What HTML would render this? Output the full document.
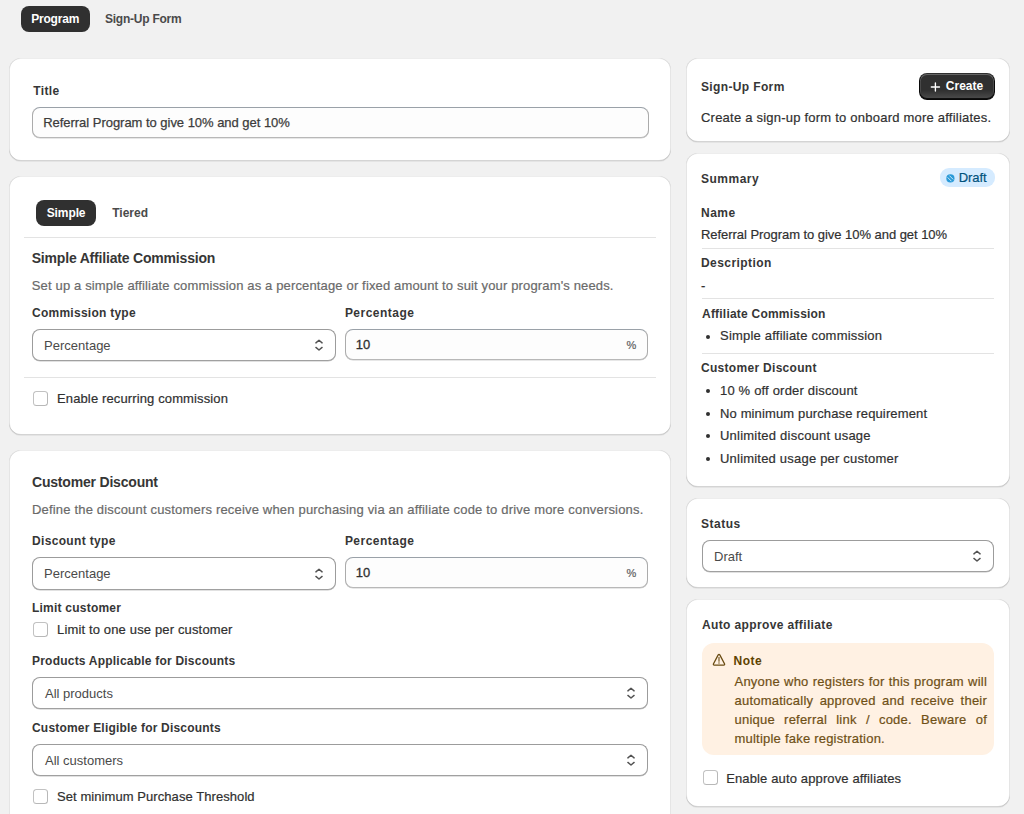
<!DOCTYPE html>
<html><head><meta charset="utf-8"><title>Program</title>
<style>
html,body{margin:0;padding:0;}
body{width:1024px;height:814px;overflow:hidden;background:#f1f1f1;position:relative;font-family:"Liberation Sans", sans-serif;}
.t{position:absolute;white-space:nowrap;line-height:20px;}
.card{position:absolute;background:#fff;border-radius:12px;box-shadow:inset 1px 0 0 0 rgba(0,0,0,.1),inset -1px 0 0 0 rgba(0,0,0,.1),inset 0 -1px 0 0 rgba(0,0,0,.17),inset 0 1px 0 0 rgba(0,0,0,.07),0 1px 0 0 rgba(0,0,0,.05);}
.pill{position:absolute;background:#303030;border-radius:8px;}
.inp{position:absolute;box-sizing:border-box;background:#fdfdfd;border:1px solid #ababab;border-top-color:#9aa1a8;border-bottom-color:#b8b8b8;border-radius:8px;box-shadow:0 0.6px 0 0 #cfcfcf;}
.sel{position:absolute;box-sizing:border-box;background:#fff;border:1px solid #9c9c9c;border-bottom-color:#a0a0a0;border-radius:8px;box-shadow:0 0.6px 0 0 #c4c4c4;}
.cb{position:absolute;box-sizing:border-box;background:#fff;border:1px solid #c2c2c2;border-right-color:#b8b8b8;border-bottom-color:#b8b8b8;border-radius:3.5px;}
.btn{position:absolute;border-radius:8px;background:linear-gradient(180deg,rgba(48,48,48,0) 63.53%,rgba(255,255,255,.15) 100%),#303030;box-shadow:inset 0 -1px 0 1px rgba(0,0,0,.8),inset 0 0 0 1px #303030,inset 0 .5px 0 1.5px rgba(255,255,255,.25);}
</style></head><body>
<div class="pill" style="left:21px;top:6px;width:69px;height:26px;"></div>
<div class="t" style="left:31.20px;top:9px;font-size:12px;font-weight:700;color:#ffffff;letter-spacing:-0.200px;">Program</div>
<div class="t" style="left:104.90px;top:9px;font-size:12px;font-weight:700;color:#4a4a4a;letter-spacing:-0.227px;">Sign-Up Form</div>
<div class="card" style="left:9px;top:58px;width:662px;height:103px;"></div>
<div class="t" style="left:33.20px;top:81px;font-size:12px;font-weight:700;color:#363636;letter-spacing:0.375px;">Title</div>
<div class="inp" style="left:32px;top:107px;width:617px;height:31px;"></div>
<div class="t" style="left:43.20px;top:113px;font-size:13px;font-weight:400;color:#3c3c3c;letter-spacing:-0.031px;-webkit-text-stroke:0.25px #3c3c3c;">Referral Program to give 10% and get 10%</div>
<div class="card" style="left:9px;top:176px;width:662px;height:259px;"></div>
<div class="pill" style="left:36px;top:200px;width:60px;height:26px;"></div>
<div class="t" style="left:46.70px;top:203px;font-size:12px;font-weight:700;color:#ffffff;letter-spacing:-0.100px;">Simple</div>
<div class="t" style="left:112.20px;top:203px;font-size:12px;font-weight:700;color:#4a4a4a;letter-spacing:0.020px;">Tiered</div>
<div style="position:absolute;left:24px;top:237px;width:632px;height:1px;background:#e3e3e3"></div>
<div class="t" style="left:31.70px;top:248px;font-size:14px;font-weight:700;color:#363636;letter-spacing:-0.185px;">Simple Affiliate Commission</div>
<div class="t" style="left:31.80px;top:276px;font-size:13px;font-weight:400;color:#6a6a6a;letter-spacing:0.148px;-webkit-text-stroke:0.2px #6a6a6a;">Set up a simple affiliate commission as a percentage or fixed amount to suit your program's needs.</div>
<div class="t" style="left:32.00px;top:303px;font-size:12px;font-weight:700;color:#363636;letter-spacing:0.257px;">Commission type</div>
<div class="t" style="left:344.90px;top:303px;font-size:12px;font-weight:700;color:#363636;letter-spacing:0.478px;">Percentage</div>
<div class="sel" style="left:32px;top:329px;width:304px;height:32px;"></div>
<div style="position:absolute;left:314px;top:338.0px;width:10px;height:14px"><svg width="10" height="14" viewBox="0 0 10 14" style="position:absolute;left:0;top:0"><path d="M1.9 4.9 L5 2.25 L8.1 4.9 M1.9 9.4 L5 12.05 L8.1 9.4" fill="none" stroke="#525252" stroke-width="1.4" stroke-linecap="round" stroke-linejoin="round"/></svg></div>
<div class="t" style="left:44.10px;top:336px;font-size:13px;font-weight:400;color:#4a4a4a;letter-spacing:0.000px;">Percentage</div>
<div class="inp" style="left:345px;top:329px;width:303px;height:31px;"></div>
<div class="t" style="left:355.80px;top:335px;font-size:13px;font-weight:400;color:#303030;letter-spacing:0.000px;-webkit-text-stroke:0.3px #303030;">10</div>
<div class="t" style="left:626.50px;top:335px;font-size:11px;font-weight:400;color:#616161;letter-spacing:0.000px;-webkit-text-stroke:0.2px #616161;">%</div>
<div style="position:absolute;left:24px;top:377px;width:632px;height:1px;background:#e3e3e3"></div>
<div class="cb" style="left:33px;top:391px;width:15px;height:15px;"></div>
<div class="t" style="left:57.00px;top:389px;font-size:13px;font-weight:400;color:#303030;letter-spacing:0.127px;-webkit-text-stroke:0.2px #303030;">Enable recurring commission</div>
<div class="card" style="left:9px;top:450px;width:662px;height:390px;"></div>
<div class="t" style="left:32.00px;top:472px;font-size:14px;font-weight:700;color:#363636;letter-spacing:-0.194px;">Customer Discount</div>
<div class="t" style="left:32.00px;top:500px;font-size:13px;font-weight:400;color:#6a6a6a;letter-spacing:0.181px;-webkit-text-stroke:0.2px #6a6a6a;">Define the discount customers receive when purchasing via an affiliate code to drive more conversions.</div>
<div class="t" style="left:32.00px;top:531px;font-size:12px;font-weight:700;color:#363636;letter-spacing:0.333px;">Discount type</div>
<div class="t" style="left:344.90px;top:531px;font-size:12px;font-weight:700;color:#363636;letter-spacing:0.478px;">Percentage</div>
<div class="sel" style="left:32px;top:557px;width:304px;height:33px;"></div>
<div style="position:absolute;left:314px;top:566.5px;width:10px;height:14px"><svg width="10" height="14" viewBox="0 0 10 14" style="position:absolute;left:0;top:0"><path d="M1.9 4.9 L5 2.25 L8.1 4.9 M1.9 9.4 L5 12.05 L8.1 9.4" fill="none" stroke="#525252" stroke-width="1.4" stroke-linecap="round" stroke-linejoin="round"/></svg></div>
<div class="t" style="left:44.10px;top:564px;font-size:13px;font-weight:400;color:#4a4a4a;letter-spacing:0.000px;">Percentage</div>
<div class="inp" style="left:345px;top:557px;width:303px;height:31px;"></div>
<div class="t" style="left:355.80px;top:563px;font-size:13px;font-weight:400;color:#303030;letter-spacing:0.000px;-webkit-text-stroke:0.3px #303030;">10</div>
<div class="t" style="left:626.50px;top:563px;font-size:11px;font-weight:400;color:#616161;letter-spacing:0.000px;-webkit-text-stroke:0.2px #616161;">%</div>
<div class="t" style="left:32.00px;top:598px;font-size:12px;font-weight:700;color:#363636;letter-spacing:0.223px;">Limit customer</div>
<div class="cb" style="left:33px;top:622px;width:15px;height:15px;"></div>
<div class="t" style="left:57.00px;top:620px;font-size:13px;font-weight:400;color:#303030;letter-spacing:0.150px;-webkit-text-stroke:0.2px #303030;">Limit to one use per customer</div>
<div class="t" style="left:32.00px;top:651px;font-size:12px;font-weight:700;color:#363636;letter-spacing:0.216px;">Products Applicable for Discounts</div>
<div class="sel" style="left:32px;top:677px;width:616px;height:32px;"></div>
<div style="position:absolute;left:626px;top:686.0px;width:10px;height:14px"><svg width="10" height="14" viewBox="0 0 10 14" style="position:absolute;left:0;top:0"><path d="M1.9 4.9 L5 2.25 L8.1 4.9 M1.9 9.4 L5 12.05 L8.1 9.4" fill="none" stroke="#525252" stroke-width="1.4" stroke-linecap="round" stroke-linejoin="round"/></svg></div>
<div class="t" style="left:45.00px;top:684px;font-size:13px;font-weight:400;color:#4a4a4a;letter-spacing:0.000px;">All products</div>
<div class="t" style="left:32.00px;top:718px;font-size:12px;font-weight:700;color:#363636;letter-spacing:0.200px;">Customer Eligible for Discounts</div>
<div class="sel" style="left:32px;top:744px;width:616px;height:32px;"></div>
<div style="position:absolute;left:626px;top:753.0px;width:10px;height:14px"><svg width="10" height="14" viewBox="0 0 10 14" style="position:absolute;left:0;top:0"><path d="M1.9 4.9 L5 2.25 L8.1 4.9 M1.9 9.4 L5 12.05 L8.1 9.4" fill="none" stroke="#525252" stroke-width="1.4" stroke-linecap="round" stroke-linejoin="round"/></svg></div>
<div class="t" style="left:45.00px;top:751px;font-size:13px;font-weight:400;color:#4a4a4a;letter-spacing:0.000px;">All customers</div>
<div class="cb" style="left:33px;top:789px;width:15px;height:15px;"></div>
<div class="t" style="left:57.00px;top:787px;font-size:13px;font-weight:400;color:#303030;letter-spacing:0.069px;-webkit-text-stroke:0.2px #303030;">Set minimum Purchase Threshold</div>
<div class="card" style="left:686px;top:58px;width:324px;height:84px;"></div>
<div class="t" style="left:701.00px;top:77px;font-size:12px;font-weight:700;color:#363636;letter-spacing:0.364px;">Sign-Up Form</div>
<div class="btn" style="left:919px;top:73px;width:76px;height:27px;"></div>
<svg style="position:absolute;left:929.5px;top:81.5px" width="11" height="10" viewBox="0 0 11 10"><path d="M5.4 0.9 V9.1 M1.3 5 H9.5" stroke="#fff" stroke-width="1.35" stroke-linecap="round"/></svg>
<div class="t" style="left:945.80px;top:76px;font-size:12px;font-weight:700;color:#ffffff;letter-spacing:0.020px;">Create</div>
<div class="t" style="left:701.00px;top:108px;font-size:13px;font-weight:400;color:#303030;letter-spacing:0.223px;-webkit-text-stroke:0.2px #303030;">Create a sign-up form to onboard more affiliates.</div>
<div class="card" style="left:686px;top:153px;width:324px;height:334px;"></div>
<div class="t" style="left:701.00px;top:169px;font-size:12px;font-weight:700;color:#363636;letter-spacing:0.500px;">Summary</div>
<div style="position:absolute;left:940px;top:168.3px;width:54.5px;height:18.6px;border-radius:9px;background:#d5ebff"></div>
<svg style="position:absolute;left:945.5px;top:173.5px" width="9" height="9" viewBox="0 0 9 9"><circle cx="4.4" cy="4.4" r="4.1" fill="#2a9ad8"/><path d="M1.6 3.4 L5.4 7.2 M3.4 1.6 L7.2 5.4" stroke="#ffffff" stroke-opacity="0.85" stroke-width="0.9"/></svg>
<div class="t" style="left:958.70px;top:168px;font-size:13px;font-weight:400;color:#00527c;letter-spacing:-0.075px;-webkit-text-stroke:0.2px #00527c;">Draft</div>
<div class="t" style="left:701.00px;top:203px;font-size:12px;font-weight:700;color:#363636;letter-spacing:0.500px;">Name</div>
<div class="t" style="left:701.00px;top:225px;font-size:13px;font-weight:400;color:#303030;letter-spacing:-0.046px;-webkit-text-stroke:0.2px #303030;">Referral Program to give 10% and get 10%</div>
<div style="position:absolute;left:702px;top:248px;width:292px;height:1px;background:#e3e3e3"></div>
<div class="t" style="left:701.00px;top:253px;font-size:12px;font-weight:700;color:#363636;letter-spacing:0.430px;">Description</div>
<div class="t" style="left:701.00px;top:276px;font-size:13px;font-weight:400;color:#303030;letter-spacing:0.000px;-webkit-text-stroke:0.2px #303030;">-</div>
<div style="position:absolute;left:702px;top:298px;width:292px;height:1px;background:#e3e3e3"></div>
<div class="t" style="left:702.00px;top:304px;font-size:12px;font-weight:700;color:#363636;letter-spacing:0.216px;">Affiliate Commission</div>
<div style="position:absolute;left:706.3px;top:334.7px;width:4px;height:4px;border-radius:2px;background:#303030"></div>
<div class="t" style="left:720.00px;top:326px;font-size:13px;font-weight:400;color:#303030;letter-spacing:0.208px;-webkit-text-stroke:0.2px #303030;">Simple affiliate commission</div>
<div style="position:absolute;left:702px;top:353px;width:292px;height:1px;background:#e3e3e3"></div>
<div class="t" style="left:701.00px;top:358px;font-size:12px;font-weight:700;color:#363636;letter-spacing:0.300px;">Customer Discount</div>
<div style="position:absolute;left:706.3px;top:388.9px;width:4px;height:4px;border-radius:2px;background:#303030"></div>
<div class="t" style="left:720.00px;top:381px;font-size:13px;font-weight:400;color:#303030;letter-spacing:0.182px;-webkit-text-stroke:0.2px #303030;">10 % off order discount</div>
<div style="position:absolute;left:706.3px;top:411.7px;width:4px;height:4px;border-radius:2px;background:#303030"></div>
<div class="t" style="left:720.00px;top:404px;font-size:13px;font-weight:400;color:#303030;letter-spacing:0.133px;-webkit-text-stroke:0.2px #303030;">No minimum purchase requirement</div>
<div style="position:absolute;left:706.3px;top:434.4px;width:4px;height:4px;border-radius:2px;background:#303030"></div>
<div class="t" style="left:720.00px;top:426px;font-size:13px;font-weight:400;color:#303030;letter-spacing:0.230px;-webkit-text-stroke:0.2px #303030;">Unlimited discount usage</div>
<div style="position:absolute;left:706.3px;top:457.09999999999997px;width:4px;height:4px;border-radius:2px;background:#303030"></div>
<div class="t" style="left:720.00px;top:449px;font-size:13px;font-weight:400;color:#303030;letter-spacing:0.207px;-webkit-text-stroke:0.2px #303030;">Unlimited usage per customer</div>
<div class="card" style="left:686px;top:498px;width:324px;height:90px;"></div>
<div class="t" style="left:701.00px;top:514px;font-size:12px;font-weight:700;color:#363636;letter-spacing:0.500px;">Status</div>
<div class="sel" style="left:702px;top:540px;width:292px;height:32px;"></div>
<div style="position:absolute;left:972px;top:549.0px;width:10px;height:14px"><svg width="10" height="14" viewBox="0 0 10 14" style="position:absolute;left:0;top:0"><path d="M1.9 4.9 L5 2.25 L8.1 4.9 M1.9 9.4 L5 12.05 L8.1 9.4" fill="none" stroke="#525252" stroke-width="1.4" stroke-linecap="round" stroke-linejoin="round"/></svg></div>
<div class="t" style="left:714.00px;top:547px;font-size:13px;font-weight:400;color:#4a4a4a;letter-spacing:0.000px;">Draft</div>
<div class="card" style="left:686px;top:599px;width:324px;height:208px;"></div>
<div class="t" style="left:702.00px;top:615px;font-size:12px;font-weight:700;color:#363636;letter-spacing:0.367px;">Auto approve affiliate</div>
<div style="position:absolute;left:702px;top:643px;width:292px;height:111.5px;border-radius:12px;background:#fff1e3"></div>
<svg style="position:absolute;left:711.5px;top:653px" width="14" height="14" viewBox="0 0 14 14"><path d="M6.2 1.9 Q7 0.8 7.8 1.9 L12.5 10.8 Q13 12.1 11.7 12.1 L2.3 12.1 Q1 12.1 1.5 10.8 Z" fill="none" stroke="#6a4c13" stroke-width="1.3" stroke-linejoin="round"/><path d="M7 4.6 V8.3" stroke="#6a4c13" stroke-width="1.1" stroke-linecap="round"/><circle cx="7" cy="10.0" r="0.7" fill="#6a4c13"/></svg>
<div class="t" style="left:733.50px;top:651px;font-size:12px;font-weight:700;color:#5e4200;letter-spacing:0.500px;">Note</div>
<div class="t" style="left:734.5px;top:671.5px;width:252.5px;white-space:normal;text-align:justify;text-align-last:left;font-size:13px;line-height:19px;color:#6f5016;letter-spacing:0.22px;-webkit-text-stroke:0.2px #6f5016">Anyone who registers for this program will automatically approved and receive their unique referral link / code. Beware of multiple fake registration.</div>
<div class="cb" style="left:703px;top:770px;width:15px;height:15px;"></div>
<div class="t" style="left:726.20px;top:769px;font-size:13px;font-weight:400;color:#303030;letter-spacing:0.134px;-webkit-text-stroke:0.2px #303030;">Enable auto approve affiliates</div>
</body></html>
